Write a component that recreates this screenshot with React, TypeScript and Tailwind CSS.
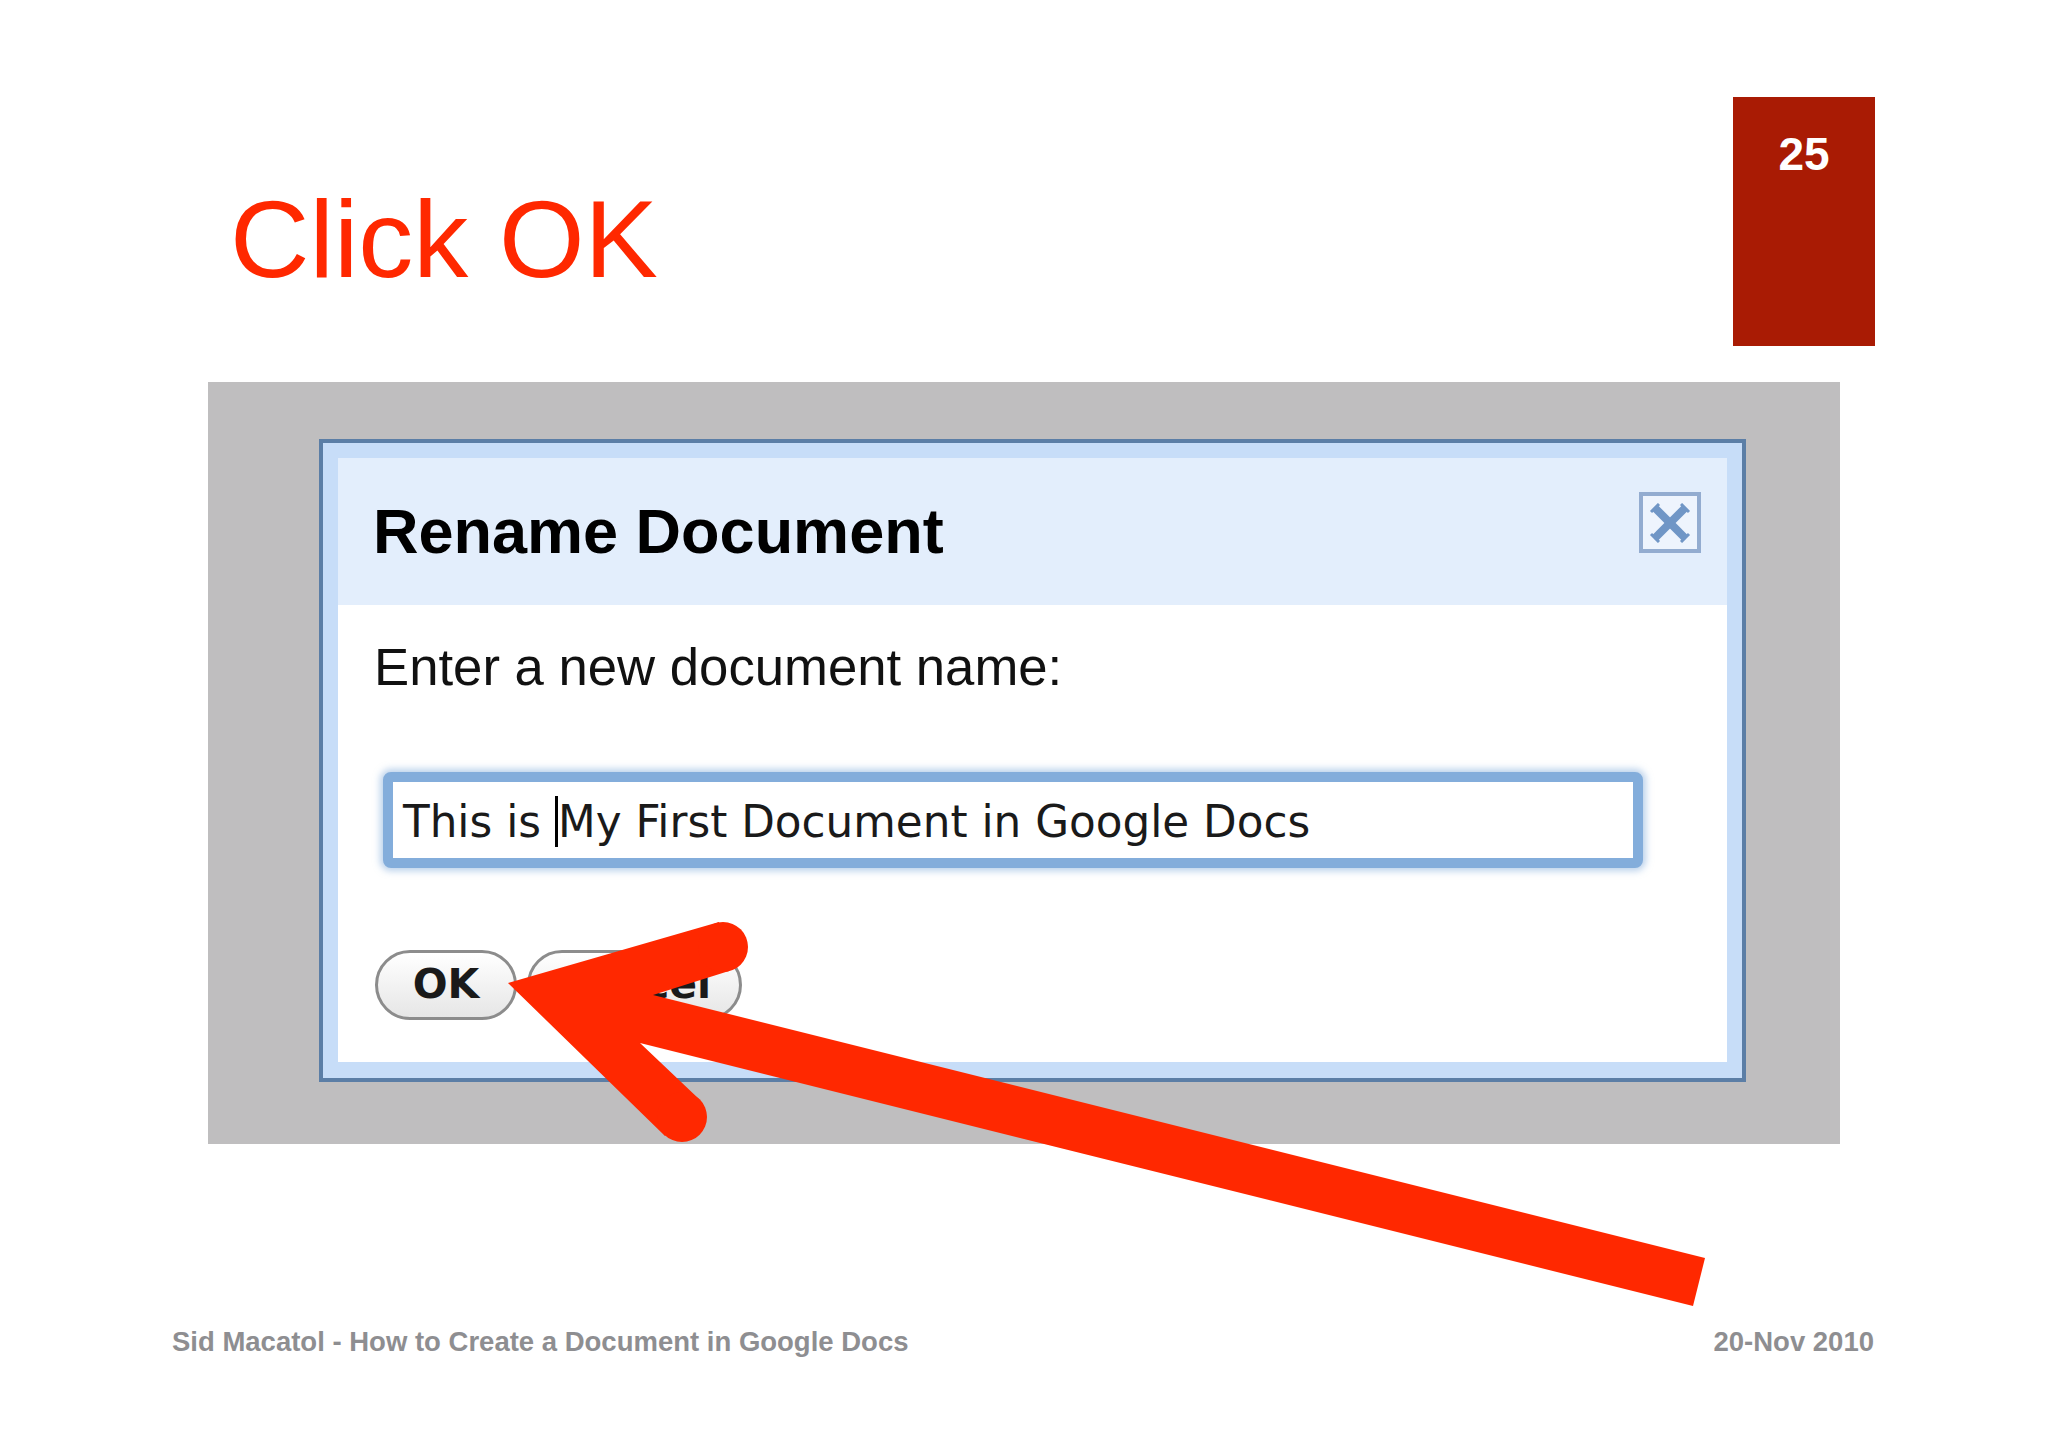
import React from 'react';

// Big red pointer drawn over the dialog, aimed at the OK button
function Arrow() {
  return (
    <svg className="absolute left-0 top-0 pointer-events-none" width="2048" height="1447" viewBox="0 0 2048 1447">
      <g fill="#ff2800">
        <polygon points="508,983 719,922 729,971 653,995 1705,1258 1693,1306 640,1043 699,1099 665,1136" />
        <circle cx="723" cy="947" r="25" />
        <circle cx="682" cy="1117" r="25" />
      </g>
    </svg>
  );
}

function CloseBox() {
  return (
    <div className="w-[62px] h-[61px] border-[4px] border-[#93acd0] bg-[#eef4fd] flex items-center justify-center">
      <svg width="42" height="40" viewBox="0 0 42 40">
        <g stroke="#7096c6" strokeWidth="8" strokeLinecap="butt">
          <line x1="6" y1="5" x2="36" y2="35" />
          <line x1="36" y1="5" x2="6" y2="35" />
        </g>
        <g stroke="#7096c6" strokeWidth="3">
          <line x1="2" y1="9" x2="10" y2="1" />
          <line x1="32" y1="39" x2="40" y2="31" />
          <line x1="32" y1="1" x2="40" y2="9" />
          <line x1="2" y1="31" x2="10" y2="39" />
        </g>
      </svg>
    </div>
  );
}

export default function App() {
  return (
    <div className="relative w-[2048px] h-[1447px] bg-white overflow-hidden font-['Liberation_Sans',Arial,sans-serif]">
      {/* Slide header */}
      <div className="flex items-start pt-[97px]">
        <h1 className="ml-[230px] mt-[87px] text-[110px] leading-none font-normal text-[#ff2800]">
          Click OK
        </h1>
        <div className="ml-auto mr-[173px] w-[142px] h-[249px] bg-[#a91b04] pt-[34px] text-center text-white font-bold text-[46px] leading-none">
          25
        </div>
      </div>

      {/* Screenshot panel */}
      <div className="ml-[208px] mt-[36px] w-[1632px] h-[762px] bg-[#bfbebf] pt-[57px] pl-[111px]">
        <div className="w-[1427px] h-[643px] border-[4px] border-[#5b7ea6] bg-[#c7ddf8] p-[15px] pb-[16px] flex flex-col">
          <div className="h-[147px] bg-[#e3eefc] flex items-start justify-between pl-[35px] pr-[26px]">
            <div className="mt-[42px] text-[63px] leading-none font-bold text-black">Rename Document</div>
            <div className="mt-[34px]">
              <CloseBox />
            </div>
          </div>
          <div className="flex-1 bg-white pt-[36px]">
            <div className="pl-[36px] text-[52.7px] leading-none text-[#111]">Enter a new document name:</div>
            <div className="ml-[45px] mt-[78px] w-[1260px] h-[96px] border-[10px] border-[#83addb] rounded-[8px] shadow-[0_0_7px_3px_rgba(130,172,219,0.55)] bg-white pt-[18px] pl-[10px] font-['DejaVu_Sans',sans-serif] text-[43.7px] leading-none text-[#1a1a1a] whitespace-nowrap">
              This is <span className="border-l-[3px] border-black">My First Document in Google Docs</span>
            </div>
            <div className="flex items-center gap-[10px] ml-[37px] mt-[82px] font-['DejaVu_Sans',sans-serif] font-bold text-[41px] leading-none text-[#1a1a1a]">
              <div className="w-[142px] h-[70px] rounded-full border-[3px] border-[#8c8c8c] bg-gradient-to-b from-white to-[#e6e6e6] flex items-center justify-center">
                OK
              </div>
              <div className="w-[215px] h-[70px] rounded-full border-[3px] border-[#8c8c8c] bg-gradient-to-b from-white to-[#e6e6e6] flex items-center justify-center">
                Cancel
              </div>
            </div>
          </div>
        </div>
      </div>

      {/* Footer */}
      <div className="flex justify-between pl-[172px] pr-[174px] mt-[184px] text-[27.5px] leading-none font-bold text-[#8e8e91]">
        <span>Sid Macatol - How to Create a Document in Google Docs</span>
        <span>20-Nov 2010</span>
      </div>

      <Arrow />
    </div>
  );
}
